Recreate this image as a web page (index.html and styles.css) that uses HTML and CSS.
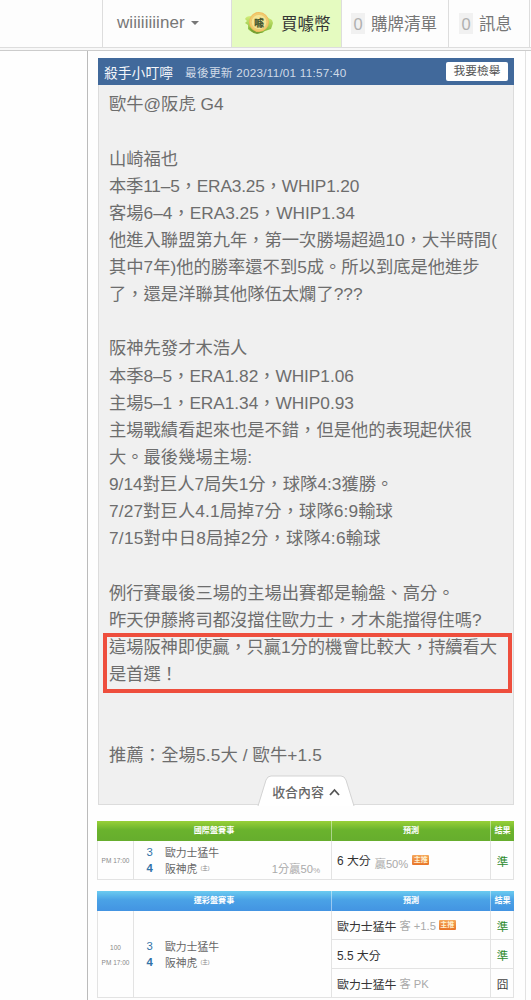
FILE: index.html
```html
<!DOCTYPE html>
<html lang="zh-Hant">
<head>
<meta charset="utf-8">
<title>殺手小叮嚀</title>
<link rel="stylesheet" href="styles.css">
</head>
<body>
<header class="nav">
  <div class="nav-item user">wiiiiiiiiner<span class="caret"></span></div>
  <div class="nav-item buy">
    <svg class="coin" width="30" height="24" viewBox="0 0 30 24">
      <defs>
        <linearGradient id="leaf" x1="0" y1="0" x2="0" y2="1"><stop offset="0" stop-color="#d8f07c"/><stop offset="1" stop-color="#7db436"/></linearGradient>
        <radialGradient id="gold"><stop offset="0" stop-color="#f4e596"/><stop offset=".7" stop-color="#f5e08c"/><stop offset="1" stop-color="#f0b452"/></radialGradient>
      </defs>
      <path d="M7 5Q2 5 1 8L3 10L1 12L4 14L4 18Q8 22 12 22L11 5zM21 4Q25 8 28 9L29 12L27 18L21 20Q17 23 13 22L17 6z" fill="url(#leaf)"/>
      <path d="M5 16Q10 22 20 21L13 23Q7 22 5 16z" fill="#789f32"/>
      <ellipse cx="15" cy="11" rx="10" ry="10" fill="url(#gold)"/>
      <ellipse cx="15" cy="11" rx="7.800" ry="7.600" fill="#f5e595" stroke="#e3bf5c" stroke-width=".6"/>
      <text class="coin-text" x="15" y="15.500" text-anchor="middle">噱</text>
    </svg>
    <span>買噱幣</span>
  </div>
  <div class="nav-item cart"><span class="count">0</span><span>購牌清單</span></div>
  <div class="nav-item msg"><span class="count">0</span><span>訊息</span></div>
</header>
<main class="page">
  <section class="post">
    <div class="post-head"><span class="author">殺手小叮嚀</span><span class="updated">最後更新 2023/11/01 11:57:40</span><span class="report">我要檢舉</span></div>
    <div class="post-body">
      <p>歐牛@阪虎 G4</p>
      <p>&nbsp;</p>
      <p>山崎福也</p>
      <p class="even">本季11–5，ERA3.25，WHIP1.20</p>
      <p>客場6–4，ERA3.25，WHIP1.34</p>
      <p>他進入聯盟第九年，第一次勝場超過10，大半時間(</p>
      <p>其中7年)他的勝率還不到5成。所以到底是他進步</p>
      <p>了，還是洋聯其他隊伍太爛了???</p>
      <p>&nbsp;</p>
      <p>阪神先發才木浩人</p>
      <p class="tight">本季8–5，ERA1.82，WHIP1.06</p>
      <p class="tight">主場5–1，ERA1.34，WHIP0.93</p>
      <p>主場戰績看起來也是不錯，但是他的表現起伏很</p>
      <p>大。最後幾場主場:</p>
      <p>9/14對巨人7局失1分，球隊4:3獲勝。</p>
      <p class="loose">7/27對巨人4.1局掉7分，球隊6:9輸球</p>
      <p class="looser">7/15對中日8局掉2分，球隊4:6輸球</p>
      <p>&nbsp;</p>
      <p>例行賽最後三場的主場出賽都是輸盤、高分。</p>
      <p>昨天伊藤將司都沒擋住歐力士，才木能擋得住嗎?</p>
      <div class="marked">
        <p>這場阪神即使贏，只贏1分的機會比較大，持續看大</p>
        <p>是首選！</p>
      </div>
      <p>&nbsp;</p>
      <p>&nbsp;</p>
      <p class="loose">推薦：全場5.5大 / 歐牛+1.5</p>
    </div>
    <div class="fold">
      <svg class="fold-shape" width="98" height="31" viewBox="0 0 98 31"><path d="M1 31L9 5Q10.500 1 14 1H84Q87.500 1 89 5L97 31" fill="#fff" stroke="#d3d3d3"/></svg>
      <span class="fold-label">收合內容<svg width="11" height="8" viewBox="0 0 11 8"><path d="M1 7L5.500 2L10 7" fill="none" stroke="#555" stroke-width="1.800"/></svg></span>
    </div>
  </section>

  <section class="bets intl">
    <div class="bet-head"><span>國際盤賽事</span><span>預測</span><span>結果</span></div>
    <div class="bet-main">
      <div class="time"><span>PM 17:00</span></div>
      <div class="teams">
        <div class="team"><b class="away">3</b><span>歐力士猛牛</span></div>
        <div class="team"><b>4</b><span>阪神虎</span><small>(主)</small><em>1分贏50<i>%</i></em></div>
      </div>
      <div class="picks">
        <div class="pick"><span class="choice">6 大分</span><span class="note low">贏50%</span><span class="tag">主推</span><span class="result">準</span></div>
      </div>
    </div>
  </section>

  <section class="bets lottery">
    <div class="bet-head"><span>運彩盤賽事</span><span>預測</span><span>結果</span></div>
    <div class="bet-main">
      <div class="time"><span>100</span><span>PM 17:00</span></div>
      <div class="teams">
        <div class="team"><b class="away">3</b><span>歐力士猛牛</span></div>
        <div class="team"><b>4</b><span>阪神虎</span><small>(主)</small></div>
      </div>
      <div class="picks">
        <div class="pick"><span class="choice">歐力士猛牛</span><span class="note">客 +1.5</span><span class="tag">主推</span><span class="result">準</span></div>
        <div class="pick"><span class="choice">5.5 大分</span><span class="result">準</span></div>
        <div class="pick"><span class="choice">歐力士猛牛</span><span class="note">客 PK</span><span class="result miss">囧</span></div>
      </div>
    </div>
  </section>
</main>
</body>
</html>
```
FILE: styles.css
```css
* { box-sizing: border-box; }
body {
  margin: 0;
  width: 531px;
  height: 1000px;
  overflow: hidden;
  background: #fefefe;
  color: #666;
  font-family: "Liberation Sans", "Noto Sans CJK TC", sans-serif;
}
p { margin: 0; }
.nav {
  display: flex;
  height: 51px;
  padding-left: 102px;
  padding-bottom: 3px;
  background: linear-gradient(#fdfdfd 47px, #ddd 47px 48px, #f8f8f8 48px);
  border-bottom: 1px solid #ccc;
}
.nav-item {
  display: flex;
  align-items: center;
  height: 48px;
  padding-bottom: 1px;
  border-left: 1px solid #ddd;
  border-bottom: 1px solid #ddd;
  font-size: 16.5px;
  color: #777;
  white-space: nowrap;
}
.user { width: 129px; padding-left: 14px; font-size: 17px; letter-spacing: 0.05px; }
.caret {
  margin-left: 6px;
  border: 4px solid transparent;
  border-top-color: #777;
  border-bottom: 0;
}
.buy { width: 110px; padding-left: 12px; gap: 7px; background: #e5fbc0; color: #333; }
.coin-text { font: 900 10px "Noto Sans CJK TC", sans-serif; fill: #4b5a32; }
.cart { width: 107px; padding-left: 9px; gap: 6px; }
.msg { width: 82px; padding-left: 10px; gap: 6px; border-right: 1px solid #ddd; }
.count { width: 14px; height: 21px; line-height: 23px; text-align: center; background: #f1f1f1; color: #b0b0b0; }

.page {
  width: 439px;
  height: 949px;
  margin-left: 87px;
  padding: 7px 11px 0 10px;
  border-left: 1px solid #bbb;
  border-right: 1px solid #e2e2e2;
}
.post { height: 747px; border: 1px solid #dcdcdc; border-top: 0; background: #f0f0f0; }
.post-head {
  display: flex;
  align-items: center;
  height: 27px;
  margin: 0 -1px;
  padding: 0 6px;
  background: #41699b;
  color: #f4f6fa;
  white-space: nowrap;
}
.author { width: 81px; font-size: 13.8px; }
.updated { flex: 1; font-size: 11.7px; letter-spacing: 0.25px; color: #d0dae7; }
.report { width: 62px; height: 19px; line-height: 18px; border-radius: 2px; background: #fff; color: #555; font-size: 11.7px; text-align: center; }
.post-body {
  height: 690px;
  padding: 6.3px 0 0 10px;
  font-size: 17.3px;
  line-height: 27.13px;
  color: #6d6d6d;
  white-space: nowrap;
}
.post-body p { height: 27.13px; }
.tight { letter-spacing: -0.05px; }
.even { letter-spacing: -0.18px; }
.loose { letter-spacing: 0.12px; }
.looser { letter-spacing: 0.24px; }
.marked { width: 409px; height: 60px; margin: -1px 0 -4.7px -6px; padding-left: 2px; border: 4px solid #ee4e3d; letter-spacing: -0.08px; }
.marked p { line-height: 20.5px; }
.fold { display: grid; width: 98px; height: 30px; margin-left: 158px; }
.fold-shape, .fold-label { grid-area: 1 / 1; }
.fold-label { display: flex; align-items: center; justify-content: center; gap: 5px; font-size: 12.9px; font-weight: 500; color: #666; padding-top: 2px; }

.bets { width: 417px; margin: 16px 0 0 -1px; }
.lottery { margin-top: 11px; }
.bet-head {
  display: grid;
  grid-template-columns: 234px 159px 24px;
  height: 20px;
  line-height: 20px;
  color: #fff;
  font-size: 8.1px;
  font-weight: 700;
  text-align: center;
}
.bet-head span + span { border-left: 1px solid rgba(255, 255, 255, 0.45); }
.intl .bet-head { background: linear-gradient(#98d038, #6ab32d 45%, #66ad2d); }
.lottery .bet-head { background: linear-gradient(#6bcbf0, #4aa2e6 45%, #4394e2); }
.bet-main { display: grid; grid-template-columns: 36px 198px 182px; border: 1px solid #e3e3e3; border-top: 0; }
.intl .bet-main { height: 39px; }
.lottery .bet-main { height: 87px; }
.time { display: flex; flex-direction: column; justify-content: center; align-items: center; border-right: 1px solid #e3e3e3; font-size: 6.5px; line-height: 15.5px; color: #888; white-space: nowrap; padding-top: 2px; }
.teams { display: flex; flex-direction: column; justify-content: center; }
.team { display: flex; align-items: center; height: 15.5px; padding-left: 12.5px; font-size: 10.8px; color: #666; white-space: nowrap; }
.team b { width: 18.5px; font-size: 11.3px; color: #3272a8; }
.team .away { font-weight: 400; }
.team small { margin-left: 3px; font-size: 5.5px; color: #888; }
.team em { margin-left: auto; padding-right: 12px; font-size: 11.2px; font-style: normal; color: #aaa; }
.team i { font-size: 8px; font-style: normal; }
.picks { display: flex; flex-direction: column; border-left: 1px solid #e3e3e3; margin-left: -1px; }
.pick { display: flex; flex: 1; align-items: center; padding-left: 5px; font-size: 11.9px; color: #333; white-space: nowrap; }
.pick + .pick { border-top: 1px solid #e3e3e3; }
.note { margin-left: 3px; font-size: 11.2px; color: #aaa; }
.low { margin: 5px 0 0 4px; }
.intl .choice { margin-top: -2px; }
.tag { width: 17px; height: 10px; margin-left: 4px; line-height: 9px; border-radius: 1px; background: linear-gradient(#f5a75c, #e87428); color: #fff0ce; font-size: 7px; font-weight: 700; text-align: center; }
.lottery .tag { margin-left: 3px; }
.result { display: grid; place-items: center; align-self: stretch; width: 24px; margin-left: auto; border-left: 1px solid #e3e3e3; color: #2c8a2c; font-size: 11.7px; }
.miss { color: #444; }
```
